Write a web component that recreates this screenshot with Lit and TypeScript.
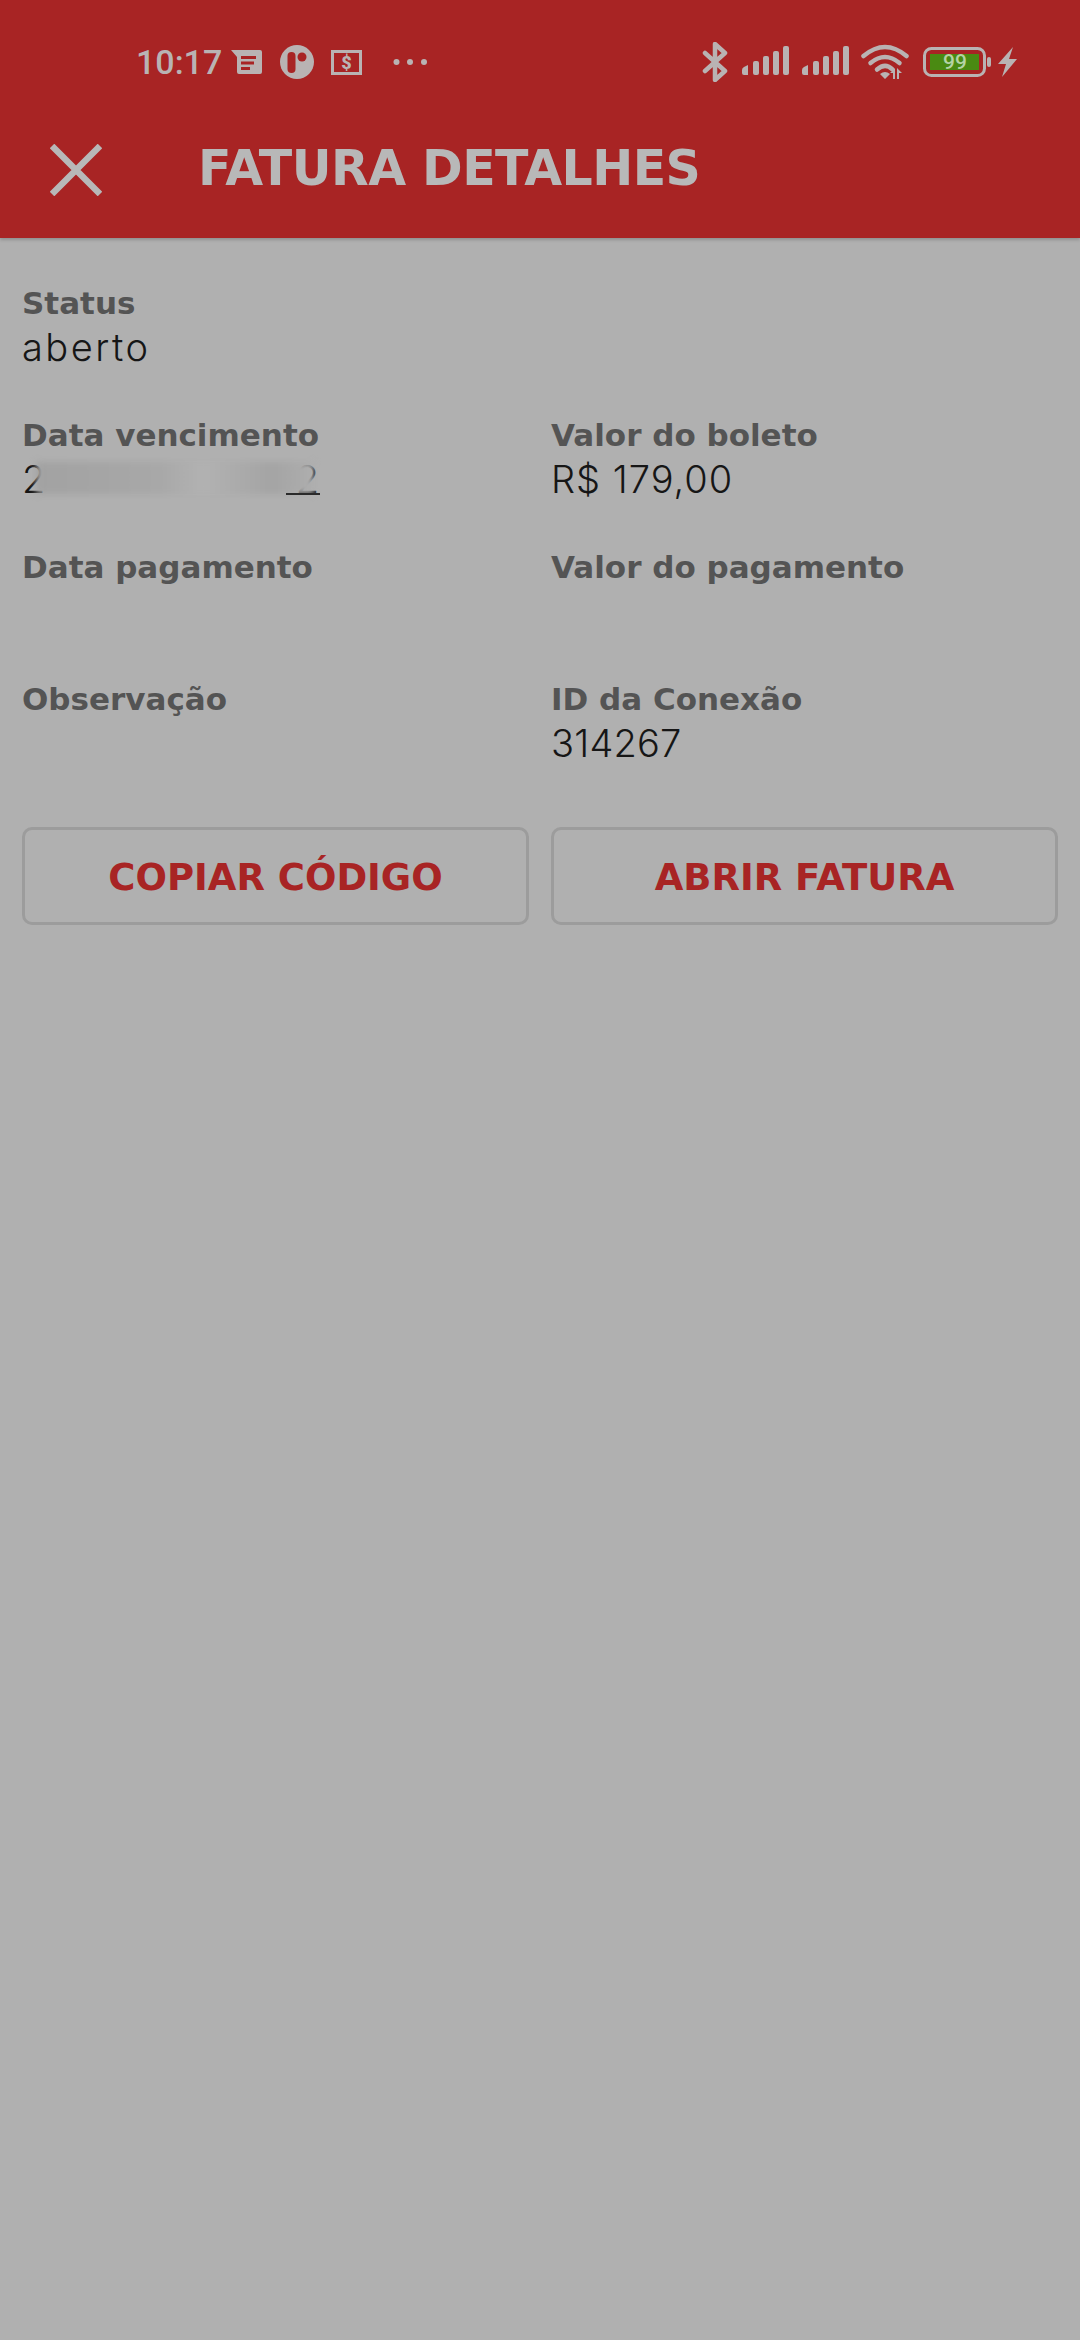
import { LitElement, html, css, svg } from "lit";
import { customElement } from "lit/decorators.js";

const bars = svg`<svg class="sig" width="48" height="32" viewBox="0 0 48 32"><g fill="#b9b3b3">
<path d="M1 24q0-2 2-3l4-2v10H3q-2 0-2-2z"/><rect x="12" y="15" width="6" height="14" rx="2"/><rect x="22" y="10" width="6" height="19" rx="2"/><rect x="32" y="5" width="6" height="24" rx="2"/><rect x="42" y="0" width="6" height="29" rx="2"/></g></svg>`;

@customElement("app-root")
export class AppRoot extends LitElement {
  static styles = css`
    :host { display: block; width: 1080px; height: 2340px; background: #b0b0b0; font-family: "Inter", "Liberation Sans", sans-serif; overflow: hidden; }
    .top { background: #a82424; height: 238px; box-shadow: 0 2px 3px rgba(0,0,0,.18); display: flex; flex-direction: column; }
    .status { height: 124px; box-sizing: border-box; padding: 0 62px 0 136px; display: flex; align-items: center; color: #b9b3b3; }
    .time { font: 500 34px/40px Roboto, sans-serif; width: 95px; }
    .left { display: flex; align-items: center; }
    .left svg { display: block; }
    .spacer { flex: 1; }
    .i2 { margin-left: 17px; }
    .i3 { margin-left: 17px; }
    .i4 { margin-left: 31px; }
    .right { display: flex; align-items: center; }
    .right svg { display: block; }
    .sig { margin-left: 13px; }
    .sig2 { margin-left: 12px; }
    .wifi { margin-left: 12px; }
    .batt { position: relative; margin-left: 14px; }
    .battnum { position: absolute; left: 0; top: 0; width: 64px; height: 30px; text-align: center; font: 500 21px/30px Roboto, sans-serif; color: #b5d3a4; }
    .bolt { margin-left: 7px; }
    .bar { flex: 1; display: flex; align-items: flex-start; padding-left: 50px; }
    .close { margin-top: 20px; display: block; }
    .title { margin: 0 0 0 96px; font: 700 49px/60px "DejaVu Sans", sans-serif; color: #b8b8b8; letter-spacing: -.55px; white-space: nowrap; padding-top: 15px; }
    .content { padding: 43px 22px 0; display: grid; grid-template-columns: 507px 507px; column-gap: 22px; row-gap: 44px; }
    .full { grid-column: 1 / span 2; }
    .label { font: 700 31px/44px "DejaVu Sans", sans-serif; color: #545454; white-space: nowrap; }
    .value { font: 300 38px/44px "Inter", sans-serif; color: #161616; height: 44px; letter-spacing: 1px; white-space: nowrap; }
    .word { letter-spacing: 2.500px; }
    .digits { letter-spacing: .2px; }
    .redact { display: flex; width: 298px; justify-content: space-between; position: relative; }
    .smear { position: absolute; left: 14px; right: 6px; top: 5px; height: 32px; background: linear-gradient(90deg, #a2a2a2, #a8a8a8 45%, #b2b2b2 60%, #a4a4a4 85%, #aeaeae); filter: blur(3px); }
    .base { position: absolute; right: 0; bottom: 6px; width: 34px; height: 2px; background: #2a2a2a; }
    .buttons { display: grid; grid-template-columns: 507px 507px; column-gap: 22px; padding: 62px 22px 0; }
    .btn { height: 98px; box-sizing: border-box; border: 3px solid #9c9c9c; border-radius: 10px; background: transparent; color: #a82424; font: 700 37px/95px "DejaVu Sans", sans-serif; text-align: center; padding: 0; }
  `;

  render() {
    return html`
      <div class="top">
        <div class="status">
          <div class="left">
            <span class="time">10:17</span>
            <svg width="32" height="26" viewBox="0 0 32 26"><path fill="#b9b3b3" fill-rule="evenodd" d="M0 1h29a2 2 0 0 1 2 2v20a2 2 0 0 1-2 2H8a2 2 0 0 1-2-2V8zM10 7v3h15V7zM10 12.500v3h13v-3zM10 18v3h9v-3z"/></svg>
            <svg class="i2" width="34" height="34" viewBox="0 0 34 34"><circle cx="17" cy="17" r="17" fill="#b9b3b3"/><rect x="7.500" y="7" width="8" height="21" rx="4" fill="#a82424"/><circle cx="22" cy="12" r="4.500" fill="#a82424"/></svg>
            <svg class="i3" width="31" height="25" viewBox="0 0 31 25"><rect x="1.500" y="1.500" width="28" height="22" fill="none" stroke="#b9b3b3" stroke-width="3"/><text x="15.500" y="19" text-anchor="middle" font-family="Roboto, sans-serif" font-weight="900" font-size="18" fill="#b9b3b3">$</text></svg>
            <svg class="i4" width="34" height="8" viewBox="0 0 34 8"><g fill="#b9b3b3"><circle cx="3.500" cy="4" r="3"/><circle cx="17" cy="4" r="3"/><circle cx="31" cy="4" r="3"/></g></svg>
          </div>
          <div class="spacer"></div>
          <div class="right">
            <svg width="26" height="40" viewBox="0 0 26 40"><path fill="none" stroke="#b9b3b3" stroke-width="4.500" stroke-linecap="round" stroke-linejoin="round" d="M3 11l20 18-10 9V2l10 9L3 29"/></svg>
            ${bars}
            <svg class="sig sig2" width="48" height="32" viewBox="0 0 48 32"><g fill="#b9b3b3"><path d="M1 24q0-2 2-3l4-2v10H3q-2 0-2-2z"/><rect x="12" y="15" width="6" height="14" rx="2"/><rect x="22" y="10" width="6" height="19" rx="2"/><rect x="32" y="5" width="6" height="24" rx="2"/><rect x="42" y="0" width="6" height="29" rx="2"/></g></svg>
            <svg class="wifi" width="48" height="36" viewBox="0 0 48 36"><g fill="none" stroke="#b9b3b3" stroke-width="4.500" stroke-linecap="round"><path d="M2.500 12Q24-6 45.500 12"/><path d="M9.500 19Q24 7 38.500 19"/><path d="M16 25.500Q24 18.500 31 25"/></g><path fill="#b9b3b3" d="M19 30q5-4 10 0l-5 5zM34 24v11h-2v-6h-3zM36 24l5 5h-3v6h-2z"/></svg>
            <div class="batt">
              <svg width="68" height="30" viewBox="0 0 68 30"><rect x="1.500" y="1.500" width="60" height="27" rx="7" fill="none" stroke="#b9b3b3" stroke-width="3"/><rect x="7" y="7" width="49" height="16" fill="#4a8a12"/><rect x="64" y="10" width="4" height="10" rx="2" fill="#b9b3b3"/></svg>
              <span class="battnum">99</span>
            </div>
            <svg class="bolt" width="20" height="30" viewBox="0 0 20 30"><path fill="#b9b3b3" d="M15 0L0 17h8L4 30 19 12h-8z"/></svg>
          </div>
        </div>
        <div class="bar">
          <svg class="close" width="52" height="52" viewBox="0 0 52 52"><path d="M2 2l48 48M50 2L2 50" stroke="#b8b8b8" stroke-width="6.500" fill="none"/></svg>
          <h1 class="title">FATURA DETALHES</h1>
        </div>
      </div>
      <div class="content">
        <div class="full"><div class="label">Status</div><div class="value word">aberto</div></div>
        <div><div class="label">Data vencimento</div><div class="value redact"><span>2</span><span>2</span><div class="smear"></div><div class="base"></div></div></div>
        <div><div class="label">Valor do boleto</div><div class="value">R$ 179,00</div></div>
        <div><div class="label">Data pagamento</div><div class="value"></div></div>
        <div><div class="label">Valor do pagamento</div><div class="value"></div></div>
        <div><div class="label">Observação</div><div class="value"></div></div>
        <div><div class="label">ID da Conexão</div><div class="value digits">314267</div></div>
      </div>
      <div class="buttons">
        <button class="btn">COPIAR CÓDIGO</button>
        <button class="btn">ABRIR FATURA</button>
      </div>
    `;
  }
}
